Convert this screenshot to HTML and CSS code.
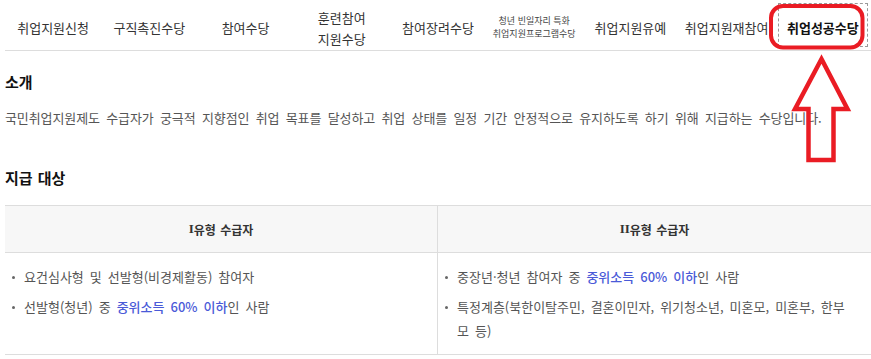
FILE: index.html
```html
<!DOCTYPE html>
<html lang="ko">
<head>
<meta charset="utf-8">
<title>취업성공수당</title>
<link rel="stylesheet" href="styles.css">
</head>
<body>
<div class="page">
  <nav class="tabs">
    <a class="tab">취업지원신청</a>
    <a class="tab">구직촉진수당</a>
    <a class="tab">참여수당</a>
    <a class="tab">훈련참여<br>지원수당</a>
    <a class="tab">참여장려수당</a>
    <a class="tab tab-small"><span class="tab-line">청년 빈일자리 특화</span><span class="tab-line">취업지원프로그램수당</span></a>
    <a class="tab">취업지원유예</a>
    <a class="tab">취업지원재참여</a>
    <a class="tab tab-active">취업성공수당</a>
  </nav>

  <h2 class="heading heading-first">소개</h2>
  <p class="intro">국민취업지원제도 수급자가 궁극적 지향점인 취업 목표를 달성하고 취업 상태를 일정 기간 안정적으로 유지하도록 하기 위해 지급하는 수당입니다.</p>

  <h2 class="heading heading-second">지급 대상</h2>
  <div class="table">
    <div class="th"><span class="roman">I</span>유형 수급자</div>
    <div class="th th-right"><span class="roman">II</span>유형 수급자</div>
    <div class="td">
      <ul class="list">
        <li><span>요건심사형 및 선발형(비경제활동) 참여자</span></li>
        <li><span>선발형(청년) 중 <span class="hl">중위소득 60% 이하</span>인 사람</span></li>
      </ul>
    </div>
    <div class="td td-right">
      <ul class="list">
        <li><span>중장년·청년 참여자 중 <span class="hl">중위소득 60% 이하</span>인 사람</span></li>
        <li><span>특정계층(북한이탈주민, 결혼이민자, 위기청소년, 미혼모, 미혼부, 한부모 등)</span></li>
      </ul>
    </div>
  </div>
</div>

<svg class="annotation" width="871" height="359" viewBox="0 0 871 359" aria-hidden="true">
  <rect x="771" y="6" width="91.5" height="41.5" rx="12" ry="12" fill="none" stroke="#ea1c24" stroke-width="4"/>
  <polygon points="821.5,59 847.5,109 833.5,109 833.5,160 808.5,160 808.5,109 795,109" fill="none" stroke="#ea1c24" stroke-width="4.5" stroke-linejoin="miter"/>
</svg>
</body>
</html>
```

FILE: styles.css
```css
* {
  box-sizing: border-box;
}

html, body {
  margin: 0;
  padding: 0;
  background: #ffffff;
}

body {
  font-family: "Noto Sans CJK KR", "Noto Sans", sans-serif;
  color: #555555;
  position: relative;
  width: 871px;
  height: 359px;
  overflow: hidden;
}

.page {
  margin-left: 5px;
  width: 866px;
}

.tabs {
  display: flex;
  height: 51px;
  border-bottom: 1px solid #dddddd;
}

.tab {
  flex: 1 1 0;
  display: flex;
  align-items: center;
  justify-content: center;
  text-align: center;
  padding-top: 5px;
  font-size: 13px;
  line-height: 21px;
  color: #333333;
  white-space: nowrap;
}

.tab-small {
  flex-direction: column;
  font-size: 9px;
  color: #444444;
  padding-top: 4px;
}

.tab-line {
  display: block;
  height: 13.2px;
  line-height: 13.2px;
}

.tab-active {
  font-weight: 700;
  color: #111111;
  outline: 1px dashed #9a9a9a;
  outline-offset: -4px;
}

.heading {
  margin: 0;
  font-size: 15px;
  line-height: 22px;
  font-weight: 700;
  color: #111111;
  word-spacing: 1px;
}

.heading-first {
  margin-top: 20px;
}

.heading-second {
  margin-top: 38px;
}

.intro {
  margin: 14px 0 0;
  font-size: 13px;
  line-height: 22px;
  color: #555555;
  letter-spacing: -0.1px;
  word-spacing: 2.8px;
  white-space: nowrap;
}

.table {
  margin-top: 16px;
  display: grid;
  grid-template-columns: 432px 1fr;
  border-top: 1px solid #dddddd;
  border-bottom: 1px solid #dddddd;
}

.th {
  height: 47px;
  background: #f7f7f7;
  border-bottom: 1px solid #dddddd;
  display: flex;
  align-items: center;
  justify-content: center;
  font-size: 12px;
  font-weight: 700;
  color: #333333;
  word-spacing: 1px;
}

.roman {
  font-family: "Liberation Serif", serif;
  font-weight: 700;
  font-size: 13px;
  letter-spacing: 0;
}

.th-right,
.td-right {
  border-left: 1px solid #dddddd;
}

.td {
  padding: 12px 14px 11px 6px;
}

.td-right {
  padding-right: 20px;
}

.list {
  margin: 0;
  padding: 0;
  list-style: none;
  display: flex;
  flex-direction: column;
  gap: 6px;
}

.list li {
  display: flex;
  align-items: flex-start;
  font-size: 13px;
  line-height: 24px;
  color: #555555;
  word-spacing: 2.4px;
}

.list li::before {
  content: "";
  flex: 0 0 auto;
  width: 3px;
  height: 3px;
  border-radius: 50%;
  background: #666666;
  margin: 11px 9px 0 1px;
}

.hl {
  color: #4a5ad8;
  font-weight: 500;
}

.annotation {
  position: absolute;
  left: 0;
  top: 0;
  pointer-events: none;
}
```
